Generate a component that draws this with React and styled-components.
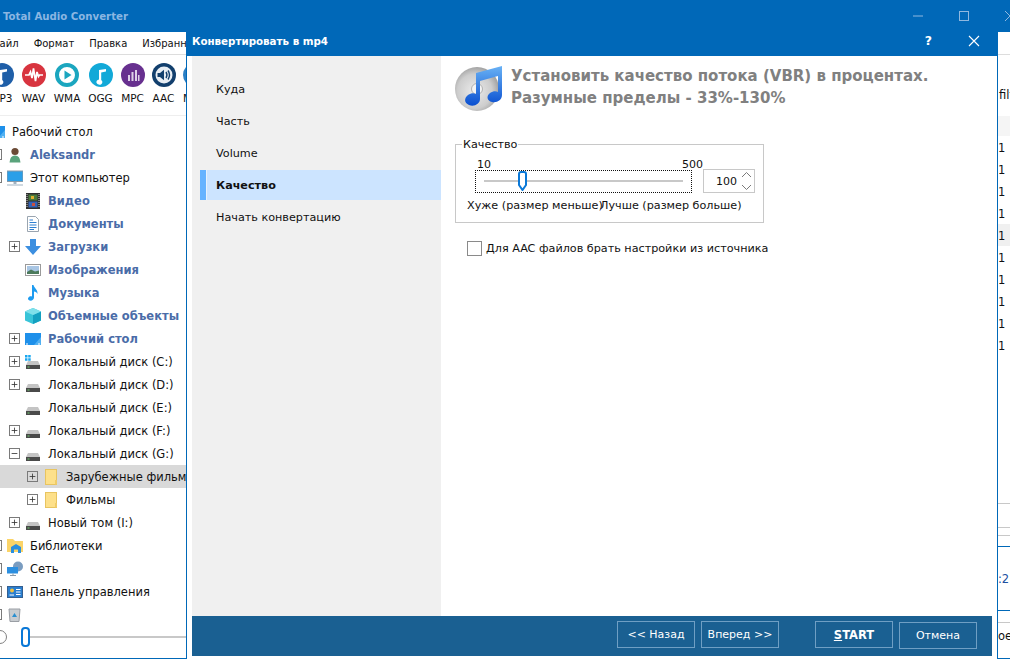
import styled, { createGlobalStyle } from 'styled-components';

const FONT = '"DejaVu Sans", "Noto Sans", sans-serif';

const GlobalStyle = createGlobalStyle`
    html, body {
        margin: 0;
        padding: 0;
        width: 1010px;
        height: 659px;
        overflow: hidden;
        background: #ffffff;
    }
    * {
        box-sizing: border-box;
    }
`;

const FORMATS = [
    { name: 'MP3', w: 31, color: '#1f5fa8', shape: 'note' },
    { name: 'WAV', w: 33, color: '#d8343f', shape: 'wave' },
    { name: 'WMA', w: 34, color: '#1ba6bf', shape: 'play' },
    { name: 'OGG', w: 33, color: '#12a9d8', shape: 'note' },
    { name: 'MPC', w: 31, color: '#67308f', shape: 'bars' },
    { name: 'AAC', w: 31, color: '#123f6d', shape: 'speaker' },
    { name: 'M4A', w: 31, color: '#2b7fc4', shape: 'note' },
];

const TREE = [
    { level: 0, icon: 'desktop', text: 'Рабочий стол', noBox: true },
    { level: 1, icon: 'user', text: 'Aleksandr', bold: true, box: 'plus' },
    { level: 1, icon: 'computer', text: 'Этот компьютер', box: 'minus' },
    { level: 2, icon: 'video', text: 'Видео', bold: true },
    { level: 2, icon: 'doc', text: 'Документы', bold: true },
    { level: 2, icon: 'down', text: 'Загрузки', bold: true, box: 'plus' },
    { level: 2, icon: 'image', text: 'Изображения', bold: true },
    { level: 2, icon: 'music', text: 'Музыка', bold: true },
    { level: 2, icon: 'cube', text: 'Объемные объекты', bold: true },
    { level: 2, icon: 'desktop', text: 'Рабочий стол', bold: true, box: 'plus' },
    { level: 2, icon: 'system', text: 'Локальный диск (C:)', box: 'plus' },
    { level: 2, icon: 'drive', text: 'Локальный диск (D:)', box: 'plus' },
    { level: 2, icon: 'drive', text: 'Локальный диск (E:)' },
    { level: 2, icon: 'drive', text: 'Локальный диск (F:)', box: 'plus' },
    { level: 2, icon: 'drive', text: 'Локальный диск (G:)', box: 'minus' },
    { level: 3, icon: 'folder', text: 'Зарубежные фильмы', box: 'plus', selected: true },
    { level: 3, icon: 'folder', text: 'Фильмы', box: 'plus' },
    { level: 2, icon: 'drive', text: 'Новый том (I:)', box: 'plus' },
    { level: 1, icon: 'library', text: 'Библиотеки', box: 'plus' },
    { level: 1, icon: 'network', text: 'Сеть', box: 'plus' },
    { level: 1, icon: 'panel', text: 'Панель управления', box: 'plus' },
    { level: 1, icon: 'trash', text: '', box: 'plus' },
];

const STEPS = ['Куда', 'Часть', 'Volume', 'Качество', 'Начать конвертацию'];
const COUNTS = Array.from({ length: 10 });

function FormatGlyph({ shape, color }) {
    return (
        <svg width="24" height="24" viewBox="0 0 24 24">
            {shape === 'play' ? (
                <>
                    <circle cx="12" cy="12" r="10" fill="#fff" stroke={color} strokeWidth="4" />
                    <path d="M9.5 7.5 L16.5 12 L9.5 16.5 Z" fill={color} />
                </>
            ) : shape === 'speaker' ? (
                <>
                    <circle cx="12" cy="12" r="12" fill={color} />
                    <circle cx="12" cy="12" r="8.5" fill="#e8eef4" />
                    <path d="M5.5 10 H8 L12 6.8 V17.2 L8 14 H5.5 Z" fill={color} />
                    <path d="M14 9 Q16 12 14 15 M16 7.5 Q19 12 16 16.5" fill="none" stroke={color} strokeWidth="1.4" />
                </>
            ) : (
                <>
                    <circle cx="12" cy="12" r="12" fill={color} />
                    {shape === 'note' && (
                        <path d="M10 16.5 V7 L17 6 V8.6 L12.2 9.4 V17 A3 2.6 0 1 1 10 16.5 Z" fill="#fff" />
                    )}
                    {shape === 'wave' && (
                        <path d="M3 12 H7 L8.5 9 L10 15 L11.5 5.5 L13.5 18 L15 9 L16.5 13.5 L17.5 12 H21" fill="none" stroke="#fff" strokeWidth="1.7" />
                    )}
                    {shape === 'bars' && (
                        <path d="M7 12 H9 V18 H7 Z M10.5 9 H12.5 V18 H10.5 Z M14 7 H16 V18 H14 Z M17 12 H18.5 V18 H17 Z" fill="#ddd0e8" />
                    )}
                </>
            )}
        </svg>
    );
}

function TreeGlyph({ name }) {
    return (
        <svg width="16" height="16" viewBox="0 0 16 16">
            {name === 'desktop' && (
                <>
                    <rect x="0" y="2" width="16" height="12" fill="#1e90ea" />
                    <path d="M9 14 L16 6 V14 Z" fill="#50b0f2" />
                    <path d="M1 13 H3 M13 13 H15" stroke="#fff" />
                </>
            )}
            {name === 'user' && (
                <>
                    <circle cx="8" cy="4.5" r="3.6" fill="#6b4a36" />
                    <path d="M2.5 15.5 Q3 8.5 8 8.5 Q13 8.5 13.5 15.5 Z" fill="#5aa37c" />
                </>
            )}
            {name === 'computer' && (
                <>
                    <rect x="0" y="1" width="16" height="10.5" fill="#2b9fe8" stroke="#8a9aa8" />
                    <path d="M6.5 12 H9.5 V14 H6.5 Z" fill="#9fb2c2" />
                    <path d="M0 15 H16" stroke="#9fb2c2" />
                </>
            )}
            {name === 'video' && (
                <>
                    <rect x="1" y="0" width="14" height="16" fill="#2e2e2e" />
                    <rect x="3.5" y="1.5" width="9" height="6" fill="#4a7a3d" />
                    <rect x="3.5" y="8.5" width="9" height="6" fill="#3563b5" />
                    <rect x="6" y="3" width="3" height="3" fill="#e0b030" />
                    <rect x="7" y="10" width="3" height="3" fill="#c85040" />
                    <path d="M2 1 V15 M14 1 V15" stroke="#cfcfcf" strokeDasharray="1 1" />
                </>
            )}
            {name === 'doc' && (
                <>
                    <path d="M2.5 0.5 H10.5 L13.5 3.5 V15.5 H2.5 Z" fill="#fff" stroke="#9aa5b0" />
                    <path d="M4.5 4 H8 M4.5 6.5 H11.5 M4.5 9 H11.5 M4.5 11.5 H11.5 M4.5 13.5 H9" stroke="#2f7fd0" />
                </>
            )}
            {name === 'down' && <path d="M5 0 H11 V7 H16 L8 16 L0 7 H5 Z" fill="#3c8fe0" />}
            {name === 'image' && (
                <>
                    <rect x="0.5" y="2.5" width="15" height="11" fill="#fff" stroke="#9a9a9a" />
                    <rect x="2" y="4" width="12" height="8" fill="#a9c6e4" />
                    <path d="M2 10 L6 7.5 L10 9.5 L14 8.5 V12 H2 Z" fill="#4c7a5c" />
                </>
            )}
            {name === 'music' && (
                <path d="M7 0 H8.5 C9 3 13 4.5 12.5 9 C12 7.5 10.5 6.8 9 6.5 V12.5 C9 15 6.5 16 4.5 15.5 C2.5 15 2.5 12.8 4.2 11.8 C5 11.3 6.2 11.2 7 11.6 Z" fill="#1d9bf0" />
            )}
            {name === 'cube' && (
                <>
                    <path d="M8 0 L16 3.5 V12.5 L8 16 L0 12.5 V3.5 Z" fill="#38c4d8" />
                    <path d="M8 7 L16 3.5 V12.5 L8 16 Z" fill="#14a0c0" />
                    <path d="M8 0 L16 3.5 L8 7 L0 3.5 Z" fill="#7fe0ea" />
                </>
            )}
            {(name === 'drive' || name === 'system') && (
                <>
                    <path d="M3 7 H13 L15 11 H1 Z" fill="#c4c4c4" />
                    <rect x="1" y="11" width="14" height="4" fill="#4a4a4a" />
                    <rect x="2.5" y="12.5" width="2" height="1" fill="#6fd06f" />
                    {name === 'system' && (
                        <path d="M0 1 H2.5 V3.5 H0 Z M3.2 1 H5.7 V3.5 H3.2 Z M0 4.2 H2.5 V6.7 H0 Z M3.2 4.2 H5.7 V6.7 H3.2 Z" fill="#19a7f0" />
                    )}
                </>
            )}
            {name === 'folder' && (
                <>
                    <rect x="2.5" y="0.5" width="11" height="15" fill="#fde08a" stroke="#e8c460" />
                    <path d="M12 11 H14 V15.5 H12 Z" fill="#f0cc68" />
                </>
            )}
            {name === 'library' && (
                <>
                    <path d="M0 1 H6 L8 3 H16 V14 H0 Z" fill="#fbd468" />
                    <path d="M4 15 V9 L9 6 L14 9 V15 H11 V11.5 H7 V15 Z" fill="#2a8fe0" />
                </>
            )}
            {name === 'network' && (
                <>
                    <circle cx="11" cy="5.5" r="5" fill="#7a9cc0" />
                    <rect x="0" y="6" width="11" height="6.5" fill="#2c8fe0" />
                    <path d="M3 14.5 H9 M6 12.5 V14.5" stroke="#8a9aa8" />
                </>
            )}
            {name === 'panel' && (
                <>
                    <rect x="0.5" y="2.5" width="15" height="11" fill="#2a7fd0" stroke="#345f90" />
                    <circle cx="5" cy="6.5" r="2" fill="#f0c040" />
                    <path d="M2.5 11 H7 M9 5.5 H13.5 M9 8 H13.5 M9 10.5 H13.5" stroke="#fff" />
                </>
            )}
            {name === 'trash' && (
                <>
                    <path d="M2 2 H13 L12 14.5 H3 Z" fill="#c8ccd0" stroke="#9a9ea4" />
                    <path d="M5 10 L7.5 6 L10 10 Z" fill="#2a8fd0" />
                </>
            )}
        </svg>
    );
}

function Expander({ kind }) {
    return (
        <ExpanderBox $hidden={!kind}>
            {kind && (
                <svg width="11" height="11" viewBox="0 0 11 11">
                    <path d={kind === 'plus' ? 'M2 5.5 H9 M5.5 2 V9' : 'M2 5.5 H9'} stroke="#333" fill="none" />
                </svg>
            )}
        </ExpanderBox>
    );
}

function CdNoteIcon() {
    return (
        <svg width="52" height="50" viewBox="0 0 52 50">
            <defs>
                <radialGradient id="disc" cx="45%" cy="55%" r="60%">
                    <stop offset="0" stopColor="#ececec" />
                    <stop offset="0.65" stopColor="#cdcdcd" />
                    <stop offset="1" stopColor="#979797" />
                </radialGradient>
                <linearGradient id="note" x1="0" y1="0" x2="0" y2="1">
                    <stop offset="0" stopColor="#69b2f5" />
                    <stop offset="1" stopColor="#0a4fd0" />
                </linearGradient>
            </defs>
            <ellipse cx="22" cy="27" rx="22" ry="22" fill="url(#disc)" />
            <circle cx="22" cy="27" r="5.5" fill="#f4f4f4" stroke="#b0b0b0" />
            <path
                d="M21 11 L47 4 V33 C47 38 42 41 37 40 C32 39 31 34 35 31 C38 29 41 29 43 30 V14 L25 19 V37 C25 42 19 45 14 43 C9 41 9 36 13 33 C16 31 19 31 21 32 Z"
                fill="url(#note)"
            />
        </svg>
    );
}

export default function App() {
    return (
        <>
            <GlobalStyle />
            <Page>
                <MainWindow>
                    <MainTitleBar>
                        <AppName>Total Audio Converter</AppName>
                        <WindowControls>
                            <svg width="12" height="12" viewBox="0 0 12 12">
                                <path d="M1 6 H11" stroke="#8fb8e0" />
                            </svg>
                            <svg width="12" height="12" viewBox="0 0 12 12">
                                <rect x="1.5" y="1.5" width="9" height="9" fill="none" stroke="#8fb8e0" />
                            </svg>
                            <svg width="12" height="12" viewBox="0 0 12 12">
                                <path d="M1 1 L11 11 M11 1 L1 11" stroke="#8fb8e0" />
                            </svg>
                        </WindowControls>
                    </MainTitleBar>
                    <MainBody>
                        <LeftPanel>
                            <MenuBar>
                                <span>Файл</span>
                                <span>Формат</span>
                                <span>Правка</span>
                                <span>Избранное</span>
                            </MenuBar>
                            <FormatBar>
                                {FORMATS.map((f) => (
                                    <FormatButton key={f.name} $w={f.w}>
                                        <FormatGlyph shape={f.shape} color={f.color} />
                                        <span>{f.name}</span>
                                    </FormatButton>
                                ))}
                            </FormatBar>
                            <Tree>
                                {TREE.map((item, i) => (
                                    <TreeRow key={i} $level={item.level} $selected={item.selected}>
                                        <Expander kind={item.box} />
                                        <TreeIcon>
                                            <TreeGlyph name={item.icon} />
                                        </TreeIcon>
                                        <TreeLabel $bold={item.bold}>{item.text}</TreeLabel>
                                    </TreeRow>
                                ))}
                            </Tree>
                            <ZoomBar>
                                <ZoomMinus />
                                <ZoomTrack>
                                    <ZoomThumb />
                                </ZoomTrack>
                            </ZoomBar>
                        </LeftPanel>
                        <RightPanel>
                            <FilterLabel>filter</FilterLabel>
                            <CountHeader />
                            {COUNTS.map((_, i) => (
                                <CountRow key={i} $active={i === 4}>1</CountRow>
                            ))}
                            <RightFooter>
                                <ThinRule />
                                <ThinRule $gap={23} />
                                <ThinRule $gap={7} />
                                <BlueRule $gap={10} />
                                <TimeText>:2</TimeText>
                                <BlueRule $gap={24} />
                                <ThinRule $gap={11} />
                                <FooterText>oe</FooterText>
                            </RightFooter>
                        </RightPanel>
                    </MainBody>
                </MainWindow>

                <Dialog>
                    <DialogTitleBar>
                        <DialogTitle>Конвертировать в mp4</DialogTitle>
                        <DialogControls>
                            <HelpMark>?</HelpMark>
                            <svg width="12" height="12" viewBox="0 0 12 12">
                                <path d="M1 1 L11 11 M11 1 L1 11" stroke="#ffffff" strokeWidth="1.1" />
                            </svg>
                        </DialogControls>
                    </DialogTitleBar>
                    <DialogBody>
                        <DialogColumns>
                            <StepList>
                                {STEPS.map((s) => (
                                    <Step key={s} $active={s === 'Качество'}>{s}</Step>
                                ))}
                            </StepList>
                            <Content>
                                <Heading>
                                    <CdNoteIcon />
                                    <HeadingText>
                                        Установить качество потока (VBR) в процентах.
                                        <br />
                                        Разумные пределы - 33%-130%
                                    </HeadingText>
                                </Heading>
                                <QualityGroup>
                                    <QualityLegend>Качество</QualityLegend>
                                    <ScaleRow>
                                        <span>10</span>
                                        <span>500</span>
                                    </ScaleRow>
                                    <SliderRow>
                                        <FocusRect>
                                            <QualityTrack>
                                                <QualityThumb>
                                                    <svg width="9" height="20" viewBox="0 0 9 20">
                                                        <path d="M1 3 Q1 1 3 1 H6 Q8 1 8 3 V14 L4.5 19 L1 14 Z" fill="#fff" stroke="#0a78d7" strokeWidth="2" />
                                                    </svg>
                                                </QualityThumb>
                                            </QualityTrack>
                                        </FocusRect>
                                        <SpinBox>
                                            <SpinValue>100</SpinValue>
                                            <SpinArrows>
                                                <svg width="11" height="22" viewBox="0 0 11 22">
                                                    <path d="M1 7 L5.5 2.5 L10 7 M1 15 L5.5 19.5 L10 15" fill="none" stroke="#7a7a7a" />
                                                </svg>
                                            </SpinArrows>
                                        </SpinBox>
                                    </SliderRow>
                                    <HintRow>
                                        <WorseHint>Хуже (размер меньше)</WorseHint>
                                        <span>Лучше (размер больше)</span>
                                    </HintRow>
                                </QualityGroup>
                                <CheckRow>
                                    <CheckBox />
                                    <span>Для AAC файлов брать настройки из источника</span>
                                </CheckRow>
                            </Content>
                        </DialogColumns>
                        <ButtonBar>
                            <ButtonGroup>
                                <BarButton>{'<< Назад'}</BarButton>
                                <BarButton>{'Вперед >>'}</BarButton>
                            </ButtonGroup>
                            <ButtonGroup>
                                <BarButton $primary><u>S</u>TART</BarButton>
                                <BarButton $low>Отмена</BarButton>
                            </ButtonGroup>
                        </ButtonBar>
                    </DialogBody>
                </Dialog>
            </Page>
        </>
    );
}

const Page = styled.div`
    position: relative;
    width: 1010px;
    height: 659px;
    overflow: hidden;
    background: #ffffff;
    font-family: ${FONT};
    font-size: 11.5px;
    color: #111111;
`;

const MainWindow = styled.div`
    display: flex;
    flex-direction: column;
    height: 659px;
    margin-left: -28px;
    width: 1038px;
`;

const MainTitleBar = styled.div`
    display: flex;
    align-items: center;
    justify-content: space-between;
    height: 32px;
    flex: none;
    padding-left: 31px;
    background: #0068b8;
`;

const AppName = styled.div`
    font-weight: bold;
    font-size: 10.2px;
    color: #8ab6e2;
`;

const WindowControls = styled.div`
    display: flex;
    gap: 34px;
    margin-right: -6px;
`;

const MainBody = styled.div`
    display: flex;
    flex: 1;
    min-height: 0;
    justify-content: space-between;
    border-bottom: 1px solid #0068b8;
`;

const LeftPanel = styled.div`
    display: flex;
    flex-direction: column;
    width: 214px;
`;

const MenuBar = styled.div`
    display: flex;
    gap: 15px;
    height: 23px;
    flex: none;
    align-items: center;
    padding-left: 19px;
    font-size: 10px;
    white-space: nowrap;
    overflow: hidden;
    border-bottom: 1px solid #dddddd;
`;

const FormatBar = styled.div`
    display: flex;
    flex: none;
    height: 61px;
    padding: 8px 0 0 14px;
    overflow: hidden;
    border-bottom: 1px solid #eeeeee;
`;

const FormatButton = styled.div`
    display: flex;
    flex: none;
    flex-direction: column;
    align-items: center;
    gap: 5px;
    width: ${(p) => p.$w}px;
    font-size: 10.5px;
`;

const Tree = styled.div`
    display: flex;
    flex-direction: column;
    flex: none;
    padding-top: 4px;
`;

const TreeRow = styled.div`
    display: flex;
    align-items: center;
    height: 23px;
    flex: none;
    padding-left: ${(p) => 1 + p.$level * 18}px;
    background: ${(p) => (p.$selected ? '#d9d9d9' : 'transparent')};
    white-space: nowrap;
    overflow: hidden;
`;

const ExpanderBox = styled.div`
    display: flex;
    flex: none;
    width: 11px;
    height: 11px;
    margin-right: 5px;
    border: ${(p) => (p.$hidden ? '0' : '1px solid #7a7a7a')};
    align-items: center;
    justify-content: center;
`;

const TreeIcon = styled.div`
    display: flex;
    flex: none;
    width: 16px;
    height: 16px;
    margin-right: 7px;
`;

const TreeLabel = styled.span`
    font-weight: ${(p) => (p.$bold ? 'bold' : 'normal')};
    color: ${(p) => (p.$bold ? '#4a6ca8' : '#111111')};
`;

const ZoomBar = styled.div`
    display: flex;
    align-items: center;
    gap: 14px;
    height: 20px;
    margin-top: 1px;
    padding-left: 21px;
`;

const ZoomMinus = styled.div`
    flex: none;
    width: 14px;
    height: 14px;
    border: 1px solid #808080;
    border-radius: 50%;
`;

const ZoomTrack = styled.div`
    flex: 1;
    height: 2px;
    position: relative;
    background: #c8c8c8;
`;

const ZoomThumb = styled.div`
    position: absolute;
    left: 0;
    top: -9px;
    width: 9px;
    height: 20px;
    border: 2px solid #0a78d7;
    border-radius: 4px;
    background: #ffffff;
`;

const RightPanel = styled.div`
    display: flex;
    flex-direction: column;
    width: 12px;
    overflow: hidden;
    font-size: 11.5px;
    white-space: nowrap;
    padding-top: 22px;
`;

const FilterLabel = styled.div`
    height: 62px;
    flex: none;
    padding: 33px 0 0 1px;
    border-top: 1px solid #dddddd;
    line-height: 14px;
`;

const CountHeader = styled.div`
    height: 20px;
    flex: none;
    background: #f5f5f5;
`;

const CountRow = styled.div`
    display: flex;
    align-items: center;
    height: 22px;
    flex: none;
    padding-top: 2px;
    background: ${(p) => (p.$active ? '#f0f0f0' : 'transparent')};
`;

const RightFooter = styled.div`
    display: flex;
    flex-direction: column;
    padding-top: 147px;
`;

const ThinRule = styled.div`
    height: 1px;
    flex: none;
    margin-top: ${(p) => p.$gap || 0}px;
    background: #c8c8c8;
`;

const BlueRule = styled.div`
    height: 1px;
    flex: none;
    margin-top: ${(p) => p.$gap || 0}px;
    background: #0068b8;
`;

const TimeText = styled.div`
    margin-top: 25px;
    height: 14px;
    line-height: 14px;
    color: #2050a0;
`;

const FooterText = styled.div`
    margin-top: 6px;
    line-height: 14px;
`;

const Dialog = styled.div`
    position: absolute;
    left: 186px;
    top: 28px;
    width: 812px;
    height: 631px;
    display: flex;
    flex-direction: column;
    border-left: 1px solid #0068b8;
    border-right: 1px solid #0068b8;
    background: #ffffff;
`;

const DialogTitleBar = styled.div`
    display: flex;
    align-items: center;
    justify-content: space-between;
    height: 28px;
    flex: none;
    margin: 0 -1px;
    padding: 0 18px 3px 6px;
    background: #0068b8;
`;

const DialogTitle = styled.div`
    font-weight: bold;
    font-size: 10.3px;
    color: #ffffff;
`;

const DialogControls = styled.div`
    display: flex;
    align-items: center;
    gap: 36px;
`;

const HelpMark = styled.span`
    color: #ffffff;
    font-size: 12.5px;
    font-weight: bold;
`;

const DialogBody = styled.div`
    display: flex;
    flex-direction: column;
    flex: 1;
    min-height: 0;
    padding: 0 5px 3px 5px;
    font-size: 11.2px;
`;

const DialogColumns = styled.div`
    display: flex;
    flex: 1;
    min-height: 0;
`;

const StepList = styled.div`
    display: flex;
    flex-direction: column;
    width: 249px;
    flex: none;
    padding: 17px 0 0 8px;
    background: #f0f0f0;
`;

const Step = styled.div`
    display: flex;
    align-items: center;
    height: 32px;
    flex: none;
    padding-left: ${(p) => (p.$active ? '10px' : '16px')};
    font-weight: ${(p) => (p.$active ? 'bold' : 'normal')};
    background: ${(p) => (p.$active ? '#cce4ff' : 'transparent')};
    border-left: ${(p) => (p.$active ? '6px solid #66b3ff' : '0')};
    ${(p) => p.$active && 'height: 30px; margin: 1px 0; box-shadow: inset 1px 0 0 #e8f2fc;'}
`;

const Content = styled.div`
    display: flex;
    flex-direction: column;
    flex: 1;
    padding: 6px 0 0 14px;
`;

const Heading = styled.div`
    display: flex;
    align-items: center;
    gap: 4px;
    height: 50px;
`;

const HeadingText = styled.div`
    font-size: 15px;
    font-weight: bold;
    line-height: 22px;
    color: #808080;
    white-space: nowrap;
`;

const QualityGroup = styled.div`
    position: relative;
    display: flex;
    flex-direction: column;
    width: 309px;
    height: 79px;
    margin-top: 32px;
    padding: 13px 0 0 20px;
    border: 1px solid #c8c8c8;
`;

const QualityLegend = styled.span`
    position: absolute;
    left: 6px;
    top: -7px;
    padding: 0 1px;
    line-height: 13px;
    background: #ffffff;
`;

const ScaleRow = styled.div`
    display: flex;
    justify-content: space-between;
    width: 227px;
    height: 11px;
    line-height: 13px;
    font-size: 11px;
    padding-left: 1px;
`;

const SliderRow = styled.div`
    display: flex;
    align-items: center;
    gap: 11px;
    margin-left: -1px;
`;

const FocusRect = styled.div`
    display: flex;
    align-items: center;
    width: 217px;
    height: 23px;
    padding: 0 8px;
    border: 1px dotted #111111;
`;

const QualityTrack = styled.div`
    position: relative;
    width: 100%;
    height: 2px;
    background: #c8c8c8;
`;

const QualityThumb = styled.div`
    position: absolute;
    left: 34px;
    top: -9px;
    display: flex;
`;

const SpinBox = styled.div`
    display: flex;
    align-items: center;
    justify-content: flex-end;
    width: 52px;
    height: 24px;
    padding-right: 2px;
    border: 1px solid #c8c8c8;
`;

const SpinValue = styled.span`
    margin-right: 4px;
    font-size: 11px;
`;

const SpinArrows = styled.span`
    display: flex;
`;

const HintRow = styled.div`
    display: flex;
    margin-top: 6px;
    margin-left: -9px;
    white-space: nowrap;
`;

const WorseHint = styled.span`
    flex: none;
    width: 133px;
`;

const CheckRow = styled.div`
    display: flex;
    align-items: center;
    gap: 4px;
    margin-top: 18px;
    margin-left: 12px;
`;

const CheckBox = styled.div`
    flex: none;
    width: 15px;
    height: 15px;
    border: 1px solid #8a8a8a;
    background: #ffffff;
`;

const ButtonBar = styled.div`
    display: flex;
    flex: none;
    justify-content: space-between;
    align-items: flex-start;
    height: 40px;
    padding: 5px 15px 0 425px;
    background: #1a6092;
`;

const ButtonGroup = styled.div`
    display: flex;
    gap: 6px;
`;

const BarButton = styled.div`
    display: flex;
    align-items: center;
    justify-content: center;
    width: 78px;
    height: 27px;
    margin-top: ${(p) => (p.$low ? '1px' : '0')};
    border: 1px solid #6f9fc4;
    color: #ffffff;
    font-size: ${(p) => (p.$primary ? '11.5px' : '11px')};
    font-weight: ${(p) => (p.$primary ? 'bold' : 'normal')};
`;
